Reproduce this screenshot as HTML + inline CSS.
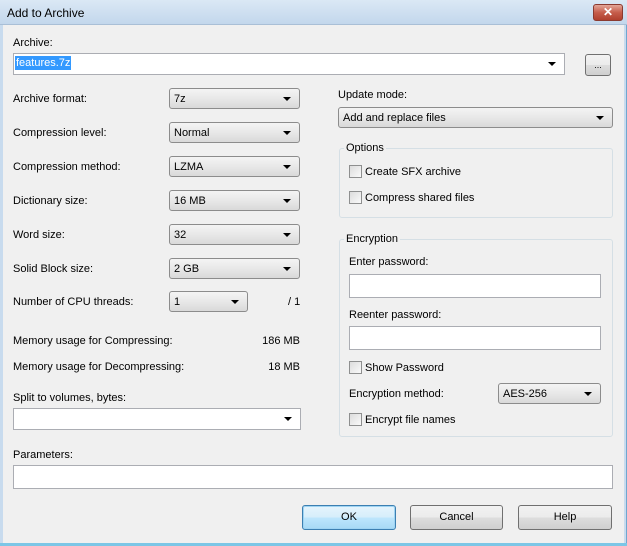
<!DOCTYPE html>
<html><head><style>
*{box-sizing:border-box;margin:0;padding:0}
body{width:627px;height:546px;overflow:hidden;background:#f0f0f0;font-family:"Liberation Sans",sans-serif;font-size:11px;color:#000;position:relative}
.a{position:absolute;white-space:nowrap}
.title{position:absolute;left:0;top:0;width:627px;height:25px;background:linear-gradient(#dbe8f5,#c3d7ec);border-bottom:1px solid #a9bfd6}
.lb{position:absolute;left:0;top:25px;width:3px;height:521px;background:#c8dbee}
.rb{position:absolute;right:0;top:25px;width:3px;height:521px;background:#c8dbee;border-right:1px solid #6fa8d0}
.bb{position:absolute;left:0;bottom:0;width:627px;height:3px;background:#7cc6e6}
.close{position:absolute;left:593px;top:4px;width:30px;height:17px;border:1px solid #8a3a30;border-radius:3px;background:linear-gradient(#e3a698,#c65d4b 50%,#b0402e);color:#fff;font-weight:bold;font-size:12px;text-align:center;line-height:15px}
.cb{position:absolute;height:21px;border:1px solid #8c8c8c;border-radius:3px;background:linear-gradient(#f4f4f4,#e8e8e8 50%,#d9d9d9);padding-left:4px;line-height:20px;font-size:11px}
.cb:after,.ed.dd:after{content:"";position:absolute;right:8px;top:8px;border-left:4px solid transparent;border-right:4px solid transparent;border-top:4px solid #000}
.ed{position:absolute;background:#fff;border:1px solid #abadb3}
.grp{position:absolute;border:1px solid #d5dfe5;border-radius:3px}
.gl{position:absolute;background:#f0f0f0;padding:0 2px}
.chk{position:absolute;width:13px;height:13px;border:1px solid #8e8f8f;background:linear-gradient(135deg,#dcdcdc,#fafafa)}
.btn{position:absolute;height:25px;border:1px solid #707070;border-radius:3px;background:linear-gradient(#f2f2f2,#ebebeb 50%,#dddddd 51%,#cfcfcf);text-align:center;line-height:23px;font-size:11px}
</style></head><body>
<div class="title"></div>
<div class="a" style="left:7px;top:6px;font-size:12px;color:#000">Add to Archive</div>
<div class="close">✕</div>
<div class="lb"></div><div class="rb"></div><div class="bb"></div>

<div class="a" style="left:13px;top:37px">Archive:</div>
<div class="ed dd" style="left:13px;top:53px;width:552px;height:22px"></div>
<div class="a" style="left:15px;top:56px;background:#3399ff;color:#fff;padding:0 1px;line-height:14px">features.7z</div>
<div class="btn" style="left:585px;top:54px;width:26px;height:22px;line-height:20px;font-size:9px">...</div>

<div class="a" style="left:13px;top:93px">Archive format:</div>
<div class="cb" style="left:169px;top:88px;width:131px">7z</div>
<div class="a" style="left:13px;top:127px">Compression level:</div>
<div class="cb" style="left:169px;top:122px;width:131px">Normal</div>
<div class="a" style="left:13px;top:161px">Compression method:</div>
<div class="cb" style="left:169px;top:156px;width:131px">LZMA</div>
<div class="a" style="left:13px;top:195px">Dictionary size:</div>
<div class="cb" style="left:169px;top:190px;width:131px">16 MB</div>
<div class="a" style="left:13px;top:229px">Word size:</div>
<div class="cb" style="left:169px;top:224px;width:131px">32</div>
<div class="a" style="left:13px;top:263px">Solid Block size:</div>
<div class="cb" style="left:169px;top:258px;width:131px">2 GB</div>
<div class="a" style="left:13px;top:296px">Number of CPU threads:</div>
<div class="cb" style="left:169px;top:291px;width:79px">1</div>
<div class="a" style="left:288px;top:296px">/ 1</div>
<div class="a" style="left:13px;top:335px">Memory usage for Compressing:</div>
<div class="a" style="right:327px;top:335px">186 MB</div>
<div class="a" style="left:13px;top:361px">Memory usage for Decompressing:</div>
<div class="a" style="right:327px;top:361px">18 MB</div>
<div class="a" style="left:13px;top:392px">Split to volumes, bytes:</div>
<div class="ed dd" style="left:13px;top:408px;width:288px;height:22px"></div>

<div class="a" style="left:338px;top:89px">Update mode:</div>
<div class="cb" style="left:338px;top:107px;width:275px">Add and replace files</div>

<div class="grp" style="left:339px;top:148px;width:274px;height:70px"></div>
<div class="gl" style="left:344px;top:142px">Options</div>
<div class="chk" style="left:349px;top:165px"></div>
<div class="a" style="left:365px;top:166px">Create SFX archive</div>
<div class="chk" style="left:349px;top:191px"></div>
<div class="a" style="left:365px;top:192px">Compress shared files</div>

<div class="grp" style="left:339px;top:239px;width:274px;height:198px"></div>
<div class="gl" style="left:344px;top:233px">Encryption</div>
<div class="a" style="left:349px;top:256px">Enter password:</div>
<div class="ed" style="left:349px;top:274px;width:252px;height:24px"></div>
<div class="a" style="left:349px;top:309px">Reenter password:</div>
<div class="ed" style="left:349px;top:326px;width:252px;height:24px"></div>
<div class="chk" style="left:349px;top:361px"></div>
<div class="a" style="left:365px;top:362px">Show Password</div>
<div class="a" style="left:349px;top:388px">Encryption method:</div>
<div class="cb" style="left:498px;top:383px;width:103px">AES-256</div>
<div class="chk" style="left:349px;top:413px"></div>
<div class="a" style="left:365px;top:414px">Encrypt file names</div>

<div class="a" style="left:13px;top:449px">Parameters:</div>
<div class="ed" style="left:13px;top:465px;width:600px;height:24px"></div>

<div class="btn" style="left:302px;top:505px;width:94px;border-color:#3c7fb1;background:linear-gradient(#e5f4fc,#d6eefb 50%,#bee6fd 51%,#a7d9f5);box-shadow:inset 0 0 0 1px #9fd4f3">OK</div>
<div class="btn" style="left:410px;top:505px;width:93px">Cancel</div>
<div class="btn" style="left:518px;top:505px;width:94px">Help</div>
</body></html>
